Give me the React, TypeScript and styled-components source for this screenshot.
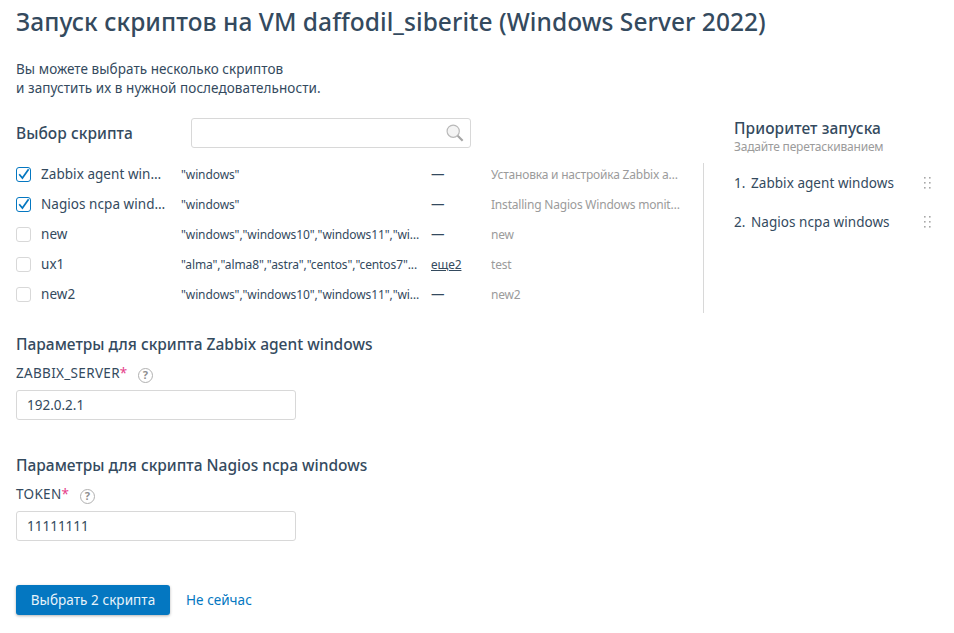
import React from 'react';
import styled, { createGlobalStyle } from 'styled-components';

const Global = createGlobalStyle`
  html, body { margin: 0; padding: 0; background: #fff; }
  body { font-family: "Noto Sans", "Open Sans", sans-serif; color: #344a5e; }
`;
const Page = styled.div`
  width: 954px; height: 633px; box-sizing: border-box; padding: 0 16px; overflow: hidden;
`;
const Title = styled.h1`
  margin: 0; padding-top: 6px; font-size: 24.5px; line-height: 32px; font-weight: 500; letter-spacing: 0.05px; white-space: nowrap;
`;
const Intro = styled.p`
  margin: 22px 0 0; font-size: 13.5px; line-height: 19px; letter-spacing: 0.06px;
`;
const Columns = styled.div`
  display: flex; margin: 20px 0 21px; align-items: flex-start;
`;
const Left = styled.div`
  width: 687px; flex: none;
`;
const SearchRow = styled.div`
  display: flex; align-items: center; height: 30px;
`;
const SectionTitle = styled.h2`
  margin: 0; width: 175px; font-size: 15.5px; line-height: 20px; font-weight: 500; letter-spacing: 0.05px;
`;
const Search = styled.div`
  width: 280px; height: 30px; box-sizing: border-box; border: 1px solid #d8d8d8; border-radius: 3px;
  display: flex; align-items: center; justify-content: flex-end; padding-right: 6px;
`;
const Table = styled.div`
  margin-top: 11px;
`;
const Row = styled.div`
  display: grid; grid-template-columns: 25px 140px 250px 60px 189px; height: 30px; align-items: center; font-size: 13.5px; letter-spacing: 0.05px;
`;
const Check = styled.span<{ $on?: boolean }>`
  width: 15px; height: 15px; box-sizing: border-box; border-radius: 3px; display: flex; align-items: center; justify-content: center;
  border: 1px solid ${p => (p.$on ? '#0477c1' : '#d8d8d8')};
`;
const Name = styled.span`
  white-space: nowrap; overflow: hidden; text-overflow: ellipsis; padding-right: 15px;
`;
const Tags = styled.span`
  font-size: 12px; white-space: nowrap; overflow: hidden; text-overflow: ellipsis; padding-right: 11px; letter-spacing: -0.1px;
`;
const More = styled.span`
  font-size: 12px; text-decoration: underline; letter-spacing: -0.1px;
`;
const Desc = styled.span`
  font-size: 12px; color: #9b9b9b; white-space: nowrap; overflow: hidden; text-overflow: ellipsis; letter-spacing: -0.2px;
`;
const Right = styled.aside`
  display: flex; flex-direction: column;
`;
const PriorityTitle = styled.h2`
  margin: 0; padding-left: 31px; font-size: 15.5px; line-height: 21px; font-weight: 500; letter-spacing: 0.08px;
`;
const PrioritySub = styled.div`
  padding-left: 31px; font-size: 12px; line-height: 16px; color: #9b9b9b; letter-spacing: -0.2px;
`;
const PriorityList = styled.div`
  border-left: 1px solid #d8d8d8; height: 150px; margin-top: 8px; box-sizing: border-box; padding-left: 30px;
`;
const PriorityItem = styled.div`
  display: flex; align-items: center; justify-content: space-between; width: 198px; height: 39px; font-size: 13.5px; letter-spacing: 0.05px;
`;
const PriorityName = styled.span`
  display: flex;
`;
const PriorityNum = styled.span`
  width: 17px;
`;
const ParamTitle = styled.h3`
  margin: 0; font-size: 15.5px; line-height: 20px; font-weight: 500;
`;
const FieldLabel = styled.div`
  margin-top: 9px; display: flex; align-items: center; gap: 10.5px; font-size: 13.5px; line-height: 20px; letter-spacing: 0.32px;
`;
const Star = styled.span`
  color: #e5408a;
`;
const Input = styled.div`
  margin-top: 7px; width: 280px; height: 30px; box-sizing: border-box; border: 1px solid #d8d8d8; border-radius: 3px;
  padding-left: 10px; font-size: 13.5px; line-height: 28px;
`;
const Spacer = styled.div`
  height: 35px;
`;
const Actions = styled.div`
  display: flex; align-items: center; gap: 16px; margin-top: 44px;
`;
const Primary = styled.button`
  width: 154px; height: 30px; border: 0; border-radius: 3px; background: #0477c1; color: #e8f3fa; font: inherit; font-size: 13.5px; letter-spacing: 0.06px;
  box-shadow: 0 1px 3px rgba(0,0,0,.3); padding: 0;
`;
const Link = styled.span`
  color: #0477c1; font-size: 13.5px; letter-spacing: 0.05px;
`;
const HelpIcon = styled.svg`
  margin-top: 5px;
`;
const Tick = () => (
  <svg width="13" height="13" viewBox="0 0 13 13"><path d="M2.2 6.2 L5.4 10 L11.6 1.2" fill="none" stroke="#0477c1" strokeWidth="1.7" /></svg>
);
const Grip = () => (
  <svg width="10" height="13" viewBox="0 0 10 13" fill="#a8a8a8">
    {[1, 6, 11].flatMap(y => [2, 7].map(x => <rect key={`${x}-${y}`} x={x} y={y} width="1.6" height="1.6" />))}
  </svg>
);
const Magnifier = () => (
  <svg width="18" height="18" viewBox="0 0 20 20" fill="none">
    <circle cx="8" cy="8" r="6.8" stroke="#b9b9b9" strokeWidth="1.3" fill="#f4f4f4" />
    <path d="M13 13 L18.5 18.5" stroke="#a6a6a6" strokeWidth="2.4" />
  </svg>
);
const Help = () => (
  <HelpIcon width="15" height="15" viewBox="0 0 15 15" fill="none">
    <circle cx="7.5" cy="7.5" r="7" stroke="#b0b0b0" />
    <text x="7.5" y="11.3" textAnchor="middle" fontSize="11" fontWeight="700" fill="#8f8f8f" fontFamily="Noto Sans">?</text>
  </HelpIcon>
);

const rows = [
  { on: true, n: 'Zabbix agent windows', t: '"windows"', m: '—', d: 'Установка и настройка Zabbix agent windows' },
  { on: true, n: 'Nagios ncpa windows', t: '"windows"', m: '—', d: 'Installing Nagios Windows monitoring agent' },
  { on: false, n: 'new', t: '"windows","windows10","windows11","windows2019"', m: '—', d: 'new' },
  { on: false, n: 'ux1', t: '"alma","alma8","astra","centos","centos7"...', m: 'еще2', d: 'test' },
  { on: false, n: 'new2', t: '"windows","windows10","windows11","windows2019"', m: '—', d: 'new2' },
];

export default function App() {
  return (
    <Page>
      <Global />
      <Title>Запуск скриптов на VM daffodil_siberite (Windows Server 2022)</Title>
      <Intro>Вы можете выбрать несколько скриптов<br />и запустить их в нужной последовательности.</Intro>
      <Columns>
        <Left>
          <SearchRow>
            <SectionTitle>Выбор скрипта</SectionTitle>
            <Search><Magnifier /></Search>
          </SearchRow>
          <Table>
            {rows.map(r => (
              <Row key={r.n}>
                <Check $on={r.on}>{r.on && <Tick />}</Check>
                <Name>{r.n}</Name>
                <Tags>{r.t}</Tags>
                {r.m === '—' ? <span>—</span> : <More>{r.m}</More>}
                <Desc>{r.d}</Desc>
              </Row>
            ))}
          </Table>
        </Left>
        <Right>
          <PriorityTitle>Приоритет запуска</PriorityTitle>
          <PrioritySub>Задайте перетаскиванием</PrioritySub>
          <PriorityList>
            <PriorityItem><PriorityName><PriorityNum>1.</PriorityNum>Zabbix agent windows</PriorityName><Grip /></PriorityItem>
            <PriorityItem><PriorityName><PriorityNum>2.</PriorityNum>Nagios ncpa windows</PriorityName><Grip /></PriorityItem>
          </PriorityList>
        </Right>
      </Columns>
      <section>
        <ParamTitle>Параметры для скрипта Zabbix agent windows</ParamTitle>
        <FieldLabel><span>ZABBIX_SERVER<Star>*</Star></span><Help /></FieldLabel>
        <Input>192.0.2.1</Input>
      </section>
      <Spacer />
      <section>
        <ParamTitle>Параметры для скрипта Nagios ncpa windows</ParamTitle>
        <FieldLabel><span>TOKEN<Star>*</Star></span><Help /></FieldLabel>
        <Input>11111111</Input>
      </section>
      <Actions>
        <Primary>Выбрать 2 скрипта</Primary>
        <Link>Не сейчас</Link>
      </Actions>
    </Page>
  );
}
